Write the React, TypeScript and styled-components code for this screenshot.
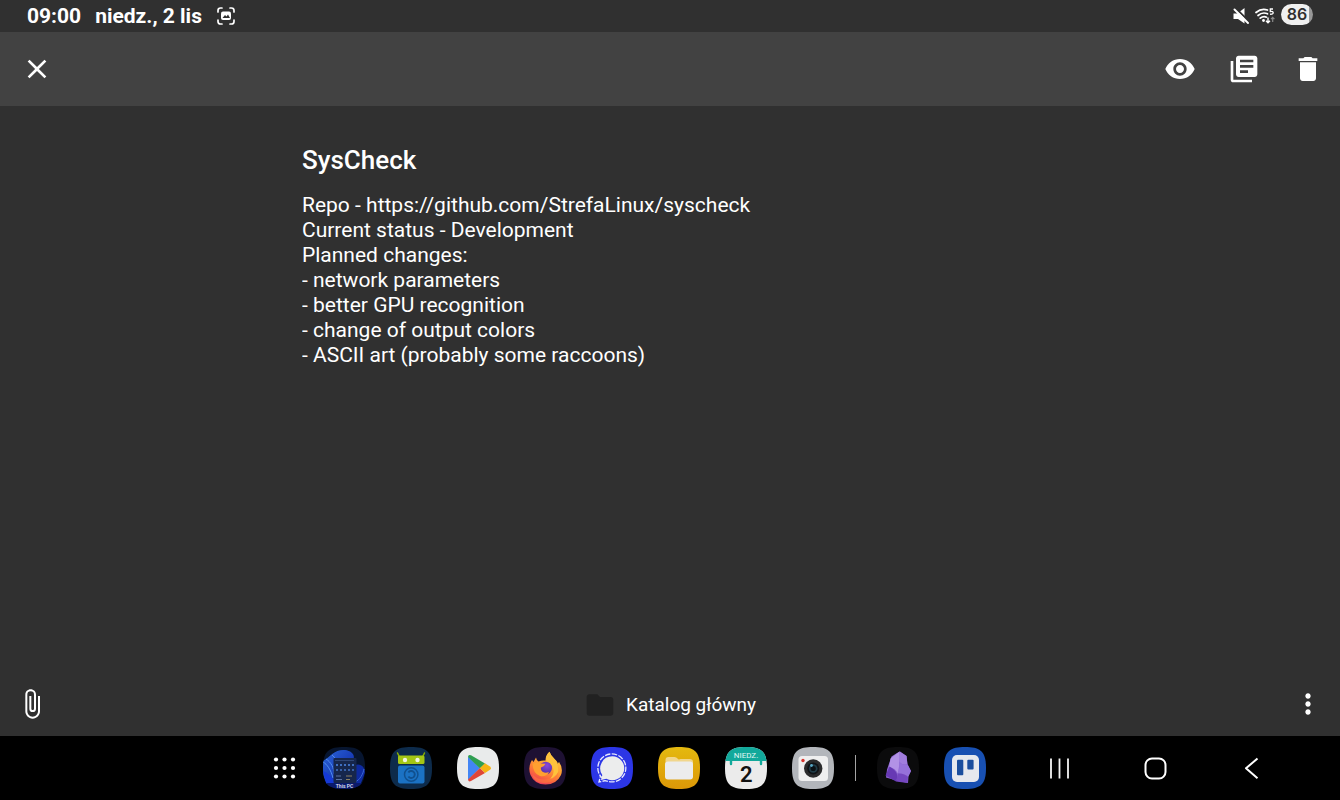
import React, { useState } from "react";
import styled, { createGlobalStyle } from "styled-components";
import {
  MdAttachFile,
  MdClose,
  MdDelete,
  MdFolder,
  MdLibraryBooks,
  MdMoreVert,
  MdVisibility,
} from "react-icons/md";

const GlobalStyle = createGlobalStyle`
  * { box-sizing: border-box; }
  body {
    margin: 0;
    background: #303030;
    color: #fff;
    font-family: Roboto, "Liberation Sans", sans-serif;
  }
`;

const Screen = styled.div`
  display: flex;
  flex-direction: column;
  min-height: 100vh;
`;

const StatusBar = styled.header`
  display: flex;
  align-items: center;
  justify-content: space-between;
  height: 32px;
  padding: 0 27px;
  background: #303030;
`;

const StatusGroup = styled.div<{ $gap: number }>`
  display: flex;
  align-items: center;
  gap: ${(p) => p.$gap}px;
`;

const StatusText = styled.span`
  font-size: 21px;
  line-height: 32px;
  font-weight: 700;
`;

const Battery = styled.span`
  display: flex;
  align-items: center;
  justify-content: center;
  width: 32px;
  height: 21px;
  margin-bottom: 3px;
  border-radius: 11px;
  background: linear-gradient(90deg, #f0f0f0 86%, #989898 86%);
  color: #303030;
  font-family: Inter, Roboto, sans-serif;
  font-size: 16px;
  line-height: 21px;
  font-weight: 600;
`;

const Toolbar = styled.nav`
  display: flex;
  align-items: center;
  justify-content: space-between;
  height: 74px;
  padding: 0 16px 0 21px;
  background: #424242;
`;

const Actions = styled.div`
  display: flex;
  gap: 32px;
`;

const IconButton = styled.button`
  display: flex;
  align-items: center;
  justify-content: center;
  width: 32px;
  height: 32px;
  padding: 0;
  border: 0;
  background: none;
  color: #fff;
  font-size: 32px;
  cursor: pointer;
`;

const Editor = styled.main`
  flex: 1;
  display: flex;
  flex-direction: column;
  width: 100%;
  max-width: 768px;
  margin: 0 auto;
  padding: 38px 16px 0;
`;

const TitleInput = styled.input`
  width: 100%;
  height: 32px;
  margin-bottom: 17px;
  padding: 0;
  border: 0;
  outline: 0;
  background: none;
  color: #fff;
  font: 500 26px/32px Roboto, "Liberation Sans", sans-serif;
`;

const BodyInput = styled.textarea`
  flex: 1;
  width: 100%;
  padding: 0;
  border: 0;
  outline: 0;
  resize: none;
  background: none;
  color: #fff;
  font: 400 21px/25px Roboto, "Liberation Sans", sans-serif;
`;

const BottomBar = styled.footer`
  display: flex;
  align-items: center;
  justify-content: space-between;
  height: 64px;
  padding: 0 16px;
`;

const FolderButton = styled.button`
  display: flex;
  align-items: center;
  gap: 10px;
  padding: 2px 0 0;
  border: 0;
  background: none;
  color: #fff;
  font: 400 19px/24px Roboto, "Liberation Sans", sans-serif;
  cursor: pointer;

  svg {
    color: #212121;
    font-size: 32px;
  }
`;

const Taskbar = styled.nav`
  display: flex;
  align-items: center;
  justify-content: flex-end;
  gap: 52px;
  height: 64px;
  padding-right: 68px;
  background: #000;
`;

const Dock = styled.div`
  display: flex;
  align-items: center;
`;

const AppGroup = styled.div`
  display: flex;
  gap: 25px;
  margin-left: 18px;
`;

const Divider = styled.span`
  width: 1px;
  height: 26px;
  margin: 0 3px 0 21px;
  background: #a4a4a4;
`;

const SystemKeys = styled.div`
  display: flex;
  gap: 54px;
`;

const DockButton = styled.button`
  width: 42px;
  height: 42px;
  padding: 0;
  border: 0;
  background: none;
  cursor: pointer;

  svg {
    display: block;
  }
`;

const SQUIRCLE = "M21 0C37 0 42 5 42 21S37 42 21 42 0 37 0 21 5 0 21 0Z";

function Tile({ fill, children }: { fill: string; children: React.ReactNode }) {
  return (
    <svg width="42" height="42" viewBox="0 0 42 42" aria-hidden="true">
      <path d={SQUIRCLE} fill={fill} />
      {children}
    </svg>
  );
}

function CaptureIcon() {
  return (
    <svg width="20" height="20" viewBox="0 0 20 20" fill="none" aria-hidden="true">
      <path
        d="M2 6V4.500Q2 2 4.500 2H6M14 2h1.500Q18 2 18 4.500V6M18 14v1.500Q18 18 15.500 18H14M6 18H4.500Q2 18 2 15.500V14"
        stroke="#fff"
        strokeWidth="1.700"
        strokeLinecap="round"
      />
      <rect x="5" y="5.500" width="10" height="8.500" rx="2" fill="#fff" />
      <path d="M6.500 12 9 9l1.500 1.500L12 8.500l2 3.500Z" fill="#303030" />
    </svg>
  );
}

function MuteIcon() {
  return (
    <svg width="16" height="18" viewBox="0 0 16 18" aria-hidden="true">
      <path d="M.5 6.500h4L11.500 1v15.500L5 12H.5Z" fill="#fff" />
      <path d="M2 .5 16 14.500" stroke="#303030" strokeWidth="2" />
      <path d="M1.500 2.500 15 16" stroke="#fff" strokeWidth="1.900" strokeLinecap="round" />
    </svg>
  );
}

function WifiIcon() {
  return (
    <svg width="20" height="18" viewBox="0 0 20 18" fill="none" aria-hidden="true">
      <g stroke="#fff" strokeWidth="1.700" strokeLinecap="round">
        <path d="M1 5.500Q6.500.8 12.500 3" />
        <path d="M3 8.500Q7.500 4.600 12.500 6.800" />
        <path d="M5.200 11.200Q8.500 8.500 11.500 10.200" />
      </g>
      <circle cx="8.500" cy="13.500" r="1.400" fill="#fff" />
      <path d="M18 2h-2.700v2.500q2.900-.4 2.900 1.300T15 7.200" stroke="#fff" strokeWidth="1.300" />
      <path d="M13 10.500v5m-2-1.700 2 2 2-2" stroke="#fff" strokeWidth="1.400" />
      <path d="M17.700 15v-4.500m-1.700 1.700 1.700-1.800 1.700 1.800" stroke="#8a8a8a" strokeWidth="1.200" />
    </svg>
  );
}

function GridIcon() {
  const steps = [12.5, 21, 29.5];
  return (
    <svg width="42" height="42" viewBox="0 0 42 42" fill="#fff" aria-hidden="true">
      {steps.map((y) => steps.map((x) => <circle key={`${x}-${y}`} cx={x + 0.5} cy={y} r="2.100" />))}
    </svg>
  );
}

function ThisPcIcon() {
  const cols = [14, 18, 22, 26, 30];
  return (
    <Tile fill="#07152f">
      <clipPath id="pc-tile">
        <path d={SQUIRCLE} />
      </clipPath>
      <linearGradient id="pc-bloom" x1="0" y1="0" x2="1" y2="1">
        <stop offset="0" stopColor="#2b66d8" />
        <stop offset="1" stopColor="#0a1ea0" />
      </linearGradient>
      <g clipPath="url(#pc-tile)">
        <path d="M0 14C8 9 12 2 22 3c8 1 12 7 6 12l-8 22H4L0 28Z" fill="url(#pc-bloom)" />
        <path d="M0 15c4 2 8 8 10 16M3 12c5 3 8 9 8 15M9 8c3 2 6 8 6 12" stroke="#5590ee" fill="none" />
        <path d="M0 24c6 2 8 7 14 13H3Z" fill="#1539d6" />
        <path d="M32 18c6-2 10 2 10 8l-4 10-10 3Z" fill="#0e2aa0" />
        <path d="M32 35c5-2 8-8 9-13" stroke="#3b69d4" fill="none" />
        <rect x="10.500" y="11" width="23" height="25" rx="1" fill="#16264c" />
        <path d="M12 13.500h19" stroke="#2f4676" />
        {cols.map((x) => (
          <g key={x}>
            <rect x={x - 1} y="17" width="2" height="2" fill="#3f6fc0" />
            <rect x={x - 1} y="22" width="2" height="2" fill="#375fa6" />
          </g>
        ))}
        <path d="M13 29h5M13 32.500h6" stroke="#5a71a0" />
        <path d="M23 29h6M23 32.500h4" stroke="#8c7f60" />
        <path d="M0 36h42v6H0Z" fill="#0a1a6c" />
        <text x="21.500" y="40.500" textAnchor="middle" fill="#e8ecff" fontSize="5" fontWeight="500" fontFamily="Roboto, sans-serif">
          This PC
        </text>
      </g>
    </Tile>
  );
}

function DroidStoreIcon() {
  return (
    <Tile fill="#0d2b4b">
      <path d="m7.500 6 2 4M34.500 6l-2 4" stroke="#8ab000" strokeWidth="1.500" strokeLinecap="round" />
      <rect x="8" y="8.500" width="26.500" height="8.500" rx="1.500" fill="#a4c614" />
      <circle cx="15" cy="13" r="2.200" fill="#f2f5df" />
      <circle cx="27.500" cy="13" r="2.200" fill="#f2f5df" />
      <rect x="8" y="18.500" width="26.500" height="18" rx="2" fill="#1b72c4" />
      <circle cx="21.200" cy="27.500" r="6.700" fill="none" stroke="#10508f" strokeWidth="1.500" />
      <path d="M18.400 25.500a3.500 3.500 0 1 1 0 4" fill="none" stroke="#10508f" strokeWidth="1.900" />
    </Tile>
  );
}

function PlayIcon() {
  return (
    <Tile fill="#e9ebeb">
      <path d="M11 9.500V33L23 21.200Z" fill="#4285f4" />
      <path d="M11 10q.2-3 3-1.700L28 16.500l-5 5Z" fill="#2f9e50" />
      <path d="M11 32.500q.5 3 3 1.600L28 26l-5-5Z" fill="#df4638" />
      <path d="m28 16.200 5 3.200q2 1.800 0 3.300L28 26l-5-4.900Z" fill="#f6b414" />
    </Tile>
  );
}

function FirefoxIcon() {
  return (
    <Tile fill="#1e1133">
      <defs>
        <linearGradient id="fox-body" x1=".8" y1="0" x2=".3" y2="1">
          <stop offset="0" stopColor="#ffd94a" />
          <stop offset=".45" stopColor="#ffa032" />
          <stop offset=".75" stopColor="#fb6a3c" />
          <stop offset="1" stopColor="#e8365f" />
        </linearGradient>
        <radialGradient id="fox-globe" cx=".6" cy=".3" r=".8">
          <stop offset="0" stopColor="#8a49dc" />
          <stop offset="1" stopColor="#4a2a9c" />
        </radialGradient>
      </defs>
      <path
        d="M8 13 9.500 15l2.500-4.500q.5 3 2.500 4 3.500-1.500 7-1Q21.500 8 25.500 4.700q1 3.800 5 7.300t3 5l1.500-2Q39.500 21 37 28 32.500 37.500 21.500 37.500T6.500 28Q3.500 20 8 13Z"
        fill="url(#fox-body)"
      />
      <path d="M25.500 4.700q1 3.800 5 7.300 4.500 5 3.500 13-2 6-8 7 5-5 3-11-1.500-4-5.500-6-3.500-4 2-10.300Z" fill="#ffc23c" />
      <circle cx="21.700" cy="21" r="6.300" fill="url(#fox-globe)" />
      <path d="M8.500 17Q13 14.500 16.500 16.500l5 .3q-.8 2.700-4.500 3.700-.6 2.500 1.500 4.300 3 1.700 6.500.2-3 5.500-9 4-7-2.500-7.500-12Z" fill="#ffa030" />
      <path d="M8 27q4.500 5.500 13 5.500T34.500 25q-1.500 10-13 11T8 27Z" fill="#ff7a3c" opacity=".6" />
    </Tile>
  );
}

function SignalIcon() {
  return (
    <Tile fill="#2c36e6">
      <path
        d="M12 31.800A14 14 0 1 1 17 34.400L14 33.700 8 35l1.300-5.500"
        fill="none"
        stroke="#e8eaff"
        strokeWidth="1.300"
        strokeDasharray="5.500 1.300"
      />
      <path d="M21.200 9.300a12 12 0 1 1-5.900 22.400L10 33l1.300-5A12 12 0 0 1 21.200 9.300Z" fill="#eceded" />
    </Tile>
  );
}

function FilesIcon() {
  return (
    <Tile fill="url(#files-bg)">
      <linearGradient id="files-bg" x1="0" y1="0" x2="0" y2="1">
        <stop offset="0" stopColor="#e4b90f" />
        <stop offset="1" stopColor="#dc9808" />
      </linearGradient>
      <path d="M7.500 13q0-3 3-3h6q2 0 3 1.500t3 .5h9q3.500 0 3.500 3v5h-27.500Z" fill="#f1d68c" />
      <rect x="7" y="14.500" width="28" height="18" rx="3" fill="#ececec" />
    </Tile>
  );
}

function CalendarIcon() {
  return (
    <Tile fill="#ebebeb">
      <clipPath id="calendar-tile">
        <path d={SQUIRCLE} />
      </clipPath>
      <path clipPath="url(#calendar-tile)" d="M0 0h42v14H0Z" fill="#12a99b" />
      <path d="M6 13v4M36 13v4" stroke="#12a99b" strokeWidth="2.400" strokeLinecap="round" />
      <text x="21" y="11" textAnchor="middle" fill="#e3f6f3" fontSize="8" fontFamily="Roboto, sans-serif">
        NIEDZ.
      </text>
      <text x="21.300" y="35" textAnchor="middle" fill="#111" fontSize="22" fontWeight="600" fontFamily="Roboto, sans-serif">
        2
      </text>
    </Tile>
  );
}

function CameraIcon() {
  return (
    <Tile fill="#b3b6bb">
      <rect x="6.500" y="9" width="29.500" height="25" rx="3.500" fill="#efefef" />
      <circle cx="11" cy="13.500" r="1.700" fill="#d8352f" />
      <circle cx="21.200" cy="21.500" r="9.200" fill="#2b2b2c" />
      <circle cx="21.200" cy="21.500" r="6" fill="#101316" />
      <circle cx="21.200" cy="21.500" r="4.300" fill="#203b46" />
      <circle cx="21.200" cy="21.500" r="2.600" fill="#0a1014" />
      <circle cx="19.500" cy="18.500" r="1.400" fill="#58a6c4" />
    </Tile>
  );
}

function CrystalIcon() {
  return (
    <Tile fill="#0b0b0c">
      <path d="m20 6 3-1.500 6.500 4.500 1 8 3.500 7-2.500 5.500-.5 6.500-10-2L9 30.500l1-8 4.500-13Z" fill="#8b63cf" />
      <path d="m22.500 4.500-9 7-1.500 9q6 0 9 6Q23 15 22.500 4.500Z" fill="#b292e6" />
      <path d="m22.500 4.500 7 4.500.8 8Q25 19 22 14Z" fill="#a17ddd" />
      <path d="m12.500 19.500-4 9 10.500 6q4.500-9-6.500-15Z" fill="#6739b4" />
      <path d="M22 15q4 4 8.500 2.500L34 24l-3 5.500q-4-3.500-10-3Q23 21 22 15Z" fill="#9671da" />
      <path d="M21 26.500q6-.5 10 3.500l-.5 6L19 34.500Z" fill="#7547c0" />
    </Tile>
  );
}

function BoardIcon() {
  return (
    <Tile fill="#1850b2">
      <rect x="8" y="8" width="27" height="27" rx="5" fill="#e6e8ee" />
      <rect x="13" y="12.700" width="6.300" height="15.600" rx="1" fill="#1b4e9e" />
      <rect x="23.300" y="12.700" width="6.300" height="9.800" rx="1" fill="#1b4e9e" />
    </Tile>
  );
}

function RecentsIcon() {
  return (
    <svg width="42" height="42" viewBox="0 0 42 42" aria-hidden="true">
      <path d="M13 11.500v20M21.500 11.500v20M30 11.500v20" stroke="#f4f4f4" strokeWidth="1.800" />
    </svg>
  );
}

function HomeIcon() {
  return (
    <svg width="42" height="42" viewBox="0 0 42 42" aria-hidden="true">
      <rect x="11.500" y="11.500" width="20" height="20" rx="6.500" fill="none" stroke="#fff" strokeWidth="2" />
    </svg>
  );
}

function BackIcon() {
  return (
    <svg width="42" height="42" viewBox="0 0 42 42" aria-hidden="true">
      <path d="M27.500 11.500 16 21.300l11.500 10" fill="none" stroke="#fff" strokeWidth="2" strokeLinejoin="round" />
    </svg>
  );
}

const pinnedApps = [
  { name: "This PC", Icon: ThisPcIcon },
  { name: "F-Droid", Icon: DroidStoreIcon },
  { name: "Google Play", Icon: PlayIcon },
  { name: "Firefox", Icon: FirefoxIcon },
  { name: "Signal", Icon: SignalIcon },
  { name: "Files", Icon: FilesIcon },
  { name: "Calendar", Icon: CalendarIcon },
  { name: "Camera", Icon: CameraIcon },
];

const recentApps = [
  { name: "Obsidian", Icon: CrystalIcon },
  { name: "Trello", Icon: BoardIcon },
];

const systemKeys = [
  { name: "Recents", Icon: RecentsIcon },
  { name: "Home", Icon: HomeIcon },
  { name: "Back", Icon: BackIcon },
];

const initialBody = `Repo - https://github.com/StrefaLinux/syscheck
Current status - Development
Planned changes:
- network parameters
- better GPU recognition
- change of output colors
- ASCII art (probably some raccoons)`;

function DockButtons({ items }: { items: { name: string; Icon: () => React.ReactElement }[] }) {
  return (
    <>
      {items.map(({ name, Icon }) => (
        <DockButton key={name} aria-label={name}>
          <Icon />
        </DockButton>
      ))}
    </>
  );
}

export default function App() {
  const [title, setTitle] = useState("SysCheck");
  const [body, setBody] = useState(initialBody);

  return (
    <Screen>
      <GlobalStyle />
      <StatusBar>
        <StatusGroup $gap={14}>
          <StatusText>09:00</StatusText>
          <StatusText>niedz., 2 lis</StatusText>
          <CaptureIcon />
        </StatusGroup>
        <StatusGroup $gap={6}>
          <MuteIcon />
          <WifiIcon />
          <Battery>86</Battery>
        </StatusGroup>
      </StatusBar>

      <Toolbar>
        <IconButton aria-label="Close">
          <MdClose />
        </IconButton>
        <Actions>
          <IconButton aria-label="Preview">
            <MdVisibility />
          </IconButton>
          <IconButton aria-label="Duplicate">
            <MdLibraryBooks />
          </IconButton>
          <IconButton aria-label="Delete">
            <MdDelete />
          </IconButton>
        </Actions>
      </Toolbar>

      <Editor>
        <TitleInput
          aria-label="Title"
          spellCheck={false}
          value={title}
          onChange={(e) => setTitle(e.target.value)}
        />
        <BodyInput
          aria-label="Note"
          spellCheck={false}
          rows={7}
          value={body}
          onChange={(e) => setBody(e.target.value)}
        />
      </Editor>

      <BottomBar>
        <IconButton aria-label="Attach file">
          <MdAttachFile />
        </IconButton>
        <FolderButton>
          <MdFolder />
          Katalog główny
        </FolderButton>
        <IconButton aria-label="More options">
          <MdMoreVert />
        </IconButton>
      </BottomBar>

      <Taskbar>
        <Dock>
          <DockButton aria-label="All apps">
            <GridIcon />
          </DockButton>
          <AppGroup>
            <DockButtons items={pinnedApps} />
          </AppGroup>
          <Divider />
          <AppGroup>
            <DockButtons items={recentApps} />
          </AppGroup>
        </Dock>
        <SystemKeys>
          <DockButtons items={systemKeys} />
        </SystemKeys>
      </Taskbar>
    </Screen>
  );
}
